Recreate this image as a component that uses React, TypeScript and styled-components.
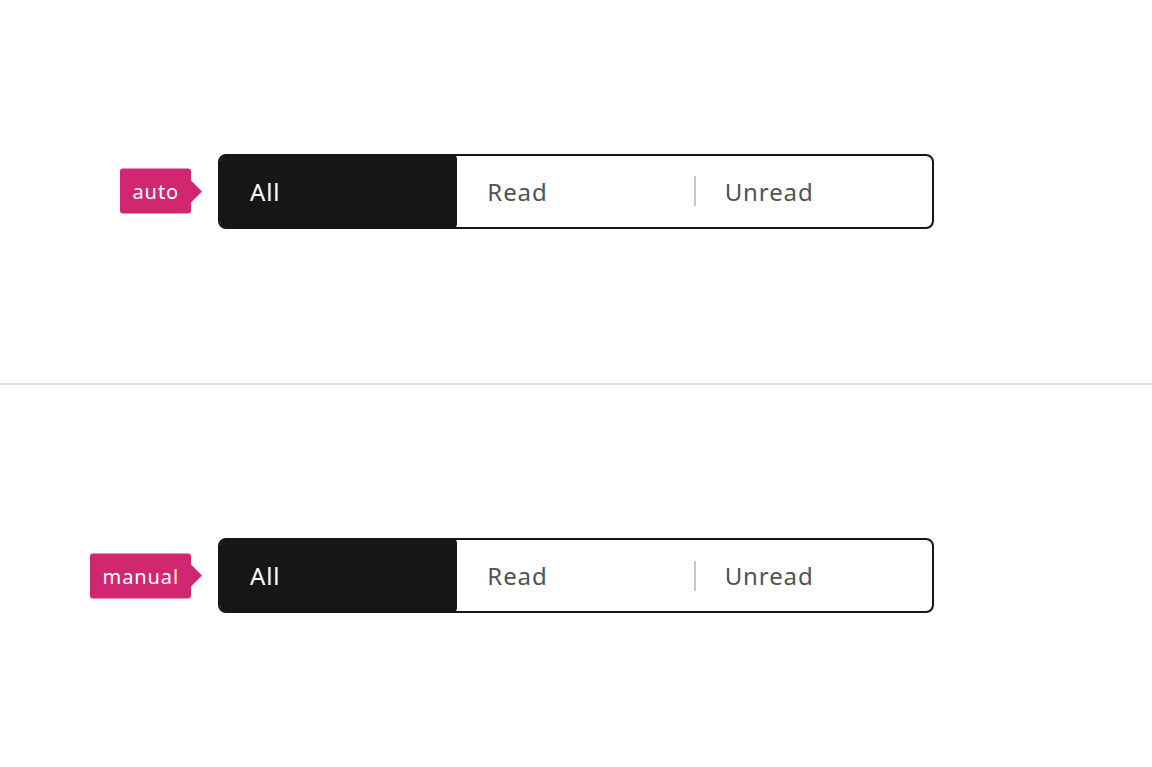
import React, { useState } from "react";
import styled, { createGlobalStyle } from "styled-components";

const GlobalStyle = createGlobalStyle`
  html, body {
    margin: 0;
    padding: 0;
    background: #ffffff;
  }
  body {
    font-family: "Noto Sans", "Open Sans", sans-serif;
  }
`;

const Page = styled.div`
  display: flex;
  flex-direction: column;
  width: 1152px;
  height: 767px;
`;

const Section = styled.section`
  flex: 1;
  display: flex;
  align-items: center;
  justify-content: center;
`;

const Rule = styled.hr`
  margin: 0;
  border: none;
  height: 2px;
  background: #e0e0e0;
`;

const Holder = styled.div`
  position: relative;
`;

const Tag = styled.span`
  position: absolute;
  top: 50%;
  right: calc(100% + 27px);
  transform: translateY(-50%);
  height: 45px;
  padding: 0 12px 0 13px;
  display: flex;
  align-items: center;
  background: #d12771;
  color: #ffffff;
  border-radius: 3px;
  font-size: 20px;
  letter-spacing: 0.9px;
  white-space: nowrap;

  &::after {
    content: "";
    position: absolute;
    left: 100%;
    top: 50%;
    transform: translateY(-50%);
    border-top: 11px solid transparent;
    border-bottom: 11px solid transparent;
    border-left: 11px solid #d12771;
  }
`;

const Switcher = styled.div`
  display: grid;
  grid-template-columns: repeat(3, 1fr);
  width: 716px;
  height: 75px;
  box-sizing: border-box;
  border: 2px solid #161616;
  border-radius: 8px;
  background: #ffffff;
`;

const Option = styled.button<{ $selected: boolean; $divider: boolean }>`
  position: relative;
  margin: -2px 0;
  border: none;
  padding: 0 0 0 30px;
  display: flex;
  align-items: center;
  text-align: left;
  font-family: inherit;
  font-size: 24px;
  letter-spacing: 0.9px;
  cursor: pointer;
  color: ${(p) => (p.$selected ? "#ffffff" : "#525252")};
  background: ${(p) => (p.$selected ? "#161616" : "transparent")};
  border-radius: ${(p) => (p.$selected ? "8px 5px 5px 8px" : "0")};

  &::before {
    content: "";
    display: ${(p) => (p.$divider ? "block" : "none")};
    position: absolute;
    left: -1px;
    top: 50%;
    transform: translateY(-50%);
    width: 2px;
    height: 30px;
    background: #c6c6c6;
  }
`;

const items = ["All", "Read", "Unread"];

function ContentSwitcher({ label }: { label: string }) {
  const [sel, setSel] = useState(0);
  return (
    <Holder>
      <Tag>{label}</Tag>
      <Switcher>
        {items.map((t, i) => (
          <Option
            key={t}
            $selected={i === sel}
            $divider={i > 0 && i !== sel && i - 1 !== sel}
            onClick={() => setSel(i)}
          >
            {t}
          </Option>
        ))}
      </Switcher>
    </Holder>
  );
}

export default function App() {
  return (
    <>
      <GlobalStyle />
      <Page>
        <Section>
          <ContentSwitcher label="auto" />
        </Section>
        <Rule />
        <Section>
          <ContentSwitcher label="manual" />
        </Section>
      </Page>
    </>
  );
}
